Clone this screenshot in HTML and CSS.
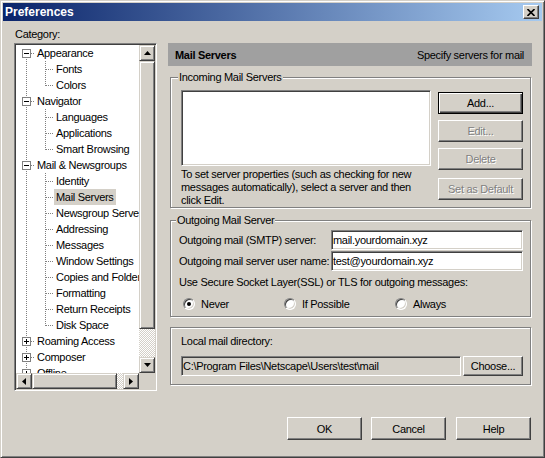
FILE: index.html
```html
<!DOCTYPE html>
<html lang="en">
    <head>
        <meta charset="UTF-8">
        <title>Preferences</title>
        <link rel="stylesheet" href="styles.css">
    </head>
    <body>
        <div class="window">
            <div class="titlebar">
                <span class="title">Preferences</span>
                <span class="close-btn">
                    <svg width="8" height="7" viewBox="0 0 8 7"><path d="M0.5 0L7.5 7M7.5 0L0.5 7" stroke="#000" stroke-width="1.6" fill="none"/></svg>
                </span>
            </div>

            <div class="main">
                <div class="left">
                    <div class="cat-label">Category:</div>
                    <div class="tree">
                        <div class="tree-view">
                            <div class="row"><i class="g node first"><i class="box"></i></i><span class="label">Appearance</span></div>
                            <div class="row"><i class="g spine"></i><i class="g branch"></i><span class="label">Fonts</span></div>
                            <div class="row"><i class="g spine"></i><i class="g branch end"></i><span class="label">Colors</span></div>
                            <div class="row"><i class="g node"><i class="box"></i></i><span class="label">Navigator</span></div>
                            <div class="row"><i class="g spine"></i><i class="g branch"></i><span class="label">Languages</span></div>
                            <div class="row"><i class="g spine"></i><i class="g branch"></i><span class="label">Applications</span></div>
                            <div class="row"><i class="g spine"></i><i class="g branch end"></i><span class="label">Smart Browsing</span></div>
                            <div class="row"><i class="g node"><i class="box"></i></i><span class="label">Mail &amp; Newsgroups</span></div>
                            <div class="row"><i class="g spine"></i><i class="g branch"></i><span class="label">Identity</span></div>
                            <div class="row"><i class="g spine"></i><i class="g branch"></i><span class="label sel">Mail Servers</span></div>
                            <div class="row"><i class="g spine"></i><i class="g branch"></i><span class="label">Newsgroup Servers</span></div>
                            <div class="row"><i class="g spine"></i><i class="g branch"></i><span class="label">Addressing</span></div>
                            <div class="row"><i class="g spine"></i><i class="g branch"></i><span class="label">Messages</span></div>
                            <div class="row"><i class="g spine"></i><i class="g branch"></i><span class="label">Window Settings</span></div>
                            <div class="row"><i class="g spine"></i><i class="g branch"></i><span class="label">Copies and Folders</span></div>
                            <div class="row"><i class="g spine"></i><i class="g branch"></i><span class="label">Formatting</span></div>
                            <div class="row"><i class="g spine"></i><i class="g branch"></i><span class="label">Return Receipts</span></div>
                            <div class="row"><i class="g spine"></i><i class="g branch end"></i><span class="label">Disk Space</span></div>
                            <div class="row"><i class="g node"><i class="box plus"></i></i><span class="label">Roaming Access</span></div>
                            <div class="row"><i class="g node"><i class="box plus"></i></i><span class="label">Composer</span></div>
                            <div class="row"><i class="g node"><i class="box plus"></i></i><span class="label">Offline</span></div>
                        </div>
                        <div class="vscroll">
                            <span class="sb-btn"><svg width="7" height="4" viewBox="0 0 7 4"><polygon points="3.5,0 7,4 0,4" fill="#000"/></svg></span>
                            <span class="sb-thumb v-thumb"></span>
                            <span class="sb-track"></span>
                            <span class="sb-btn"><svg width="7" height="4" viewBox="0 0 7 4"><polygon points="0,0 7,0 3.5,4" fill="#000"/></svg></span>
                        </div>
                        <div class="hscroll">
                            <span class="sb-btn"><svg width="4" height="7" viewBox="0 0 4 7"><polygon points="4,0 4,7 0,3.5" fill="#000"/></svg></span>
                            <span class="sb-thumb h-thumb"></span>
                            <span class="sb-track"></span>
                            <span class="sb-btn"><svg width="4" height="7" viewBox="0 0 4 7"><polygon points="0,0 4,3.5 0,7" fill="#000"/></svg></span>
                        </div>
                        <div class="sb-corner"></div>
                    </div>
                </div>

                <div class="panel">
                    <div class="panel-head">
                        <b>Mail Servers</b>
                        <span>Specify servers for mail</span>
                    </div>

                    <div class="group incoming">
                        <div class="legend">Incoming Mail Servers</div>
                        <div class="incoming-body">
                            <div class="incoming-left">
                                <div class="listbox"></div>
                                <p class="hint">To set server properties (such as checking for new<br>messages automatically), select a server and then<br>click Edit.</p>
                            </div>
                            <div class="btn-col">
                                <button class="btn default">Add...</button>
                                <button class="btn" disabled>Edit...</button>
                                <button class="btn" disabled>Delete</button>
                                <button class="btn spaced" disabled>Set as Default</button>
                            </div>
                        </div>
                    </div>

                    <div class="group outgoing">
                        <div class="legend">Outgoing Mail Server</div>
                        <div class="field-row">
                            <label class="field-label">Outgoing mail (SMTP) server:</label>
                            <input class="field" type="text" value="mail.yourdomain.xyz">
                        </div>
                        <div class="field-row">
                            <label class="field-label">Outgoing mail server user name:</label>
                            <input class="field" type="text" value="test@yourdomain.xyz">
                        </div>
                        <p class="ssl-text">Use Secure Socket Layer(SSL) or TLS for outgoing messages:</p>
                        <div class="radios">
                            <span class="radio-item w1"><i class="radio on"></i>Never</span>
                            <span class="radio-item w2"><i class="radio"></i>If Possible</span>
                            <span class="radio-item"><i class="radio"></i>Always</span>
                        </div>
                    </div>

                    <div class="group local">
                        <p class="local-label">Local mail directory:</p>
                        <div class="local-row">
                            <input class="field path" type="text" value="C:\Program Files\Netscape\Users\test\mail" readonly>
                            <button class="btn choose">Choose...</button>
                        </div>
                    </div>
                </div>
            </div>

            <div class="footer">
                <button class="btn big">OK</button>
                <button class="btn big">Cancel</button>
                <button class="btn big help">Help</button>
            </div>
        </div>
    </body>
</html>
```

FILE: styles.css
```css
body {
    margin: 0;
    background: #d4d0c8;
    font-family: "Liberation Sans", Arial, sans-serif;
    font-size: 11px;
    letter-spacing: -0.3px;
    color: #000;
}
p {
    margin: 0;
}
.window {
    width: 545px;
    height: 458px;
    box-sizing: border-box;
    border: 1px solid;
    border-color: #d4d0c8 #404040 #404040 #d4d0c8;
    box-shadow: inset 1px 1px #fff, inset -1px -1px #808080;
    padding: 2px;
    background: #d4d0c8;
}
.titlebar {
    height: 18px;
    display: flex;
    align-items: center;
    padding: 0 3px 0 2px;
    background: linear-gradient(to right, #0a246a, #a6caf0);
}
.title {
    flex: 1;
    color: #fff;
    font-weight: bold;
    font-size: 12px;
    letter-spacing: 0;
}
.close-btn {
    width: 16px;
    height: 14px;
    box-sizing: border-box;
    display: flex;
    align-items: center;
    justify-content: center;
    background: #d4d0c8;
    border: 1px solid;
    border-color: #fff #404040 #404040 #fff;
    box-shadow: inset -1px -1px #808080;
}

/* layout */
.main {
    display: flex;
    gap: 11px;
    padding: 6px 10px 0 11px;
}
.left {
    width: 143px;
}
.cat-label {
    height: 16px;
    line-height: 14px;
    padding-left: 1px;
}
.panel {
    width: 364px;
    padding-top: 16px;
}

/* tree */
.tree {
    width: 143px;
    height: 348px;
    box-sizing: border-box;
    border: 1px solid;
    border-color: #808080 #fff #fff #808080;
    box-shadow: inset 1px 1px #404040, inset -1px -1px #d4d0c8;
    padding: 1px;
    display: grid;
    grid-template-columns: 1fr 16px;
    grid-template-rows: 1fr 16px;
    background: #fff;
}
.tree-view {
    overflow: hidden;
}
.row {
    display: flex;
    height: 16px;
    white-space: nowrap;
}
.g {
    flex: none;
    width: 19px;
    height: 16px;
    box-sizing: border-box;
    background-repeat: no-repeat;
}
.g.spine {
    background-image: repeating-linear-gradient(to bottom, #808080 0 1px, transparent 1px 2px);
    background-size: 1px 16px;
    background-position: 10px 0;
}
.g.node {
    padding: 4px 0 0 6px;
    background-image: repeating-linear-gradient(to bottom, #808080 0 1px, transparent 1px 2px),
        repeating-linear-gradient(to right, #808080 0 1px, transparent 1px 2px);
    background-size: 1px 16px, 4px 1px;
    background-position: 10px 0, 15px 8px;
}
.g.node.first {
    background-size: 1px 8px, 4px 1px;
    background-position: 10px 8px, 15px 8px;
}
.g.branch {
    background-image: repeating-linear-gradient(to bottom, #808080 0 1px, transparent 1px 2px),
        repeating-linear-gradient(to right, #808080 0 1px, transparent 1px 2px);
    background-size: 1px 16px, 8px 1px;
    background-position: 10px 0, 11px 8px;
}
.g.branch.end {
    background-size: 1px 9px, 8px 1px;
}
.box {
    display: block;
    width: 9px;
    height: 9px;
    box-sizing: border-box;
    border: 1px solid #808080;
    background: linear-gradient(#000, #000) no-repeat center / 5px 1px, #fff;
}
.box.plus {
    background: linear-gradient(#000, #000) no-repeat center / 5px 1px,
        linear-gradient(#000, #000) no-repeat center / 1px 5px, #fff;
}
.label {
    padding: 0 2px;
    line-height: 16px;
}
.label.sel {
    background: #d4d0c8;
}

/* scrollbars */
.vscroll {
    display: flex;
    flex-direction: column;
}
.hscroll {
    display: flex;
}
.sb-btn, .sb-thumb {
    flex: none;
    box-sizing: border-box;
    background: #d4d0c8;
    border: 1px solid;
    border-color: #d4d0c8 #404040 #404040 #d4d0c8;
    box-shadow: inset 1px 1px #fff, inset -1px -1px #808080;
}
.sb-btn {
    width: 16px;
    height: 16px;
    display: flex;
    align-items: center;
    justify-content: center;
}
.v-thumb {
    height: 268px;
}
.h-thumb {
    width: 85px;
}
.sb-track {
    flex: 1;
    background: conic-gradient(#d4d0c8 25%, #fff 0 50%, #d4d0c8 0 75%, #fff 0);
    background-size: 2px 2px;
}
.sb-corner {
    background: #d4d0c8;
}

/* right panel */
.panel-head {
    height: 23px;
    display: flex;
    align-items: center;
    justify-content: space-between;
    padding: 0 8px 0 7px;
    background: #a0a0a0;
}
.group {
    margin: 11px 1px 0 2px;
    border: 1px solid #808080;
    box-shadow: inset 1px 1px #fff, 1px 1px #fff;
}
.legend {
    width: fit-content;
    line-height: 13px;
    padding: 0 1px;
    background: #d4d0c8;
}
.incoming {
    padding: 0 7px 0 10px;
}
.incoming .legend {
    margin: -7px 0 6px -3px;
}
.incoming-body {
    display: flex;
    gap: 7px;
}
.listbox {
    width: 250px;
    height: 76px;
    box-sizing: border-box;
    background: #fff;
    border: 1px solid;
    border-color: #808080 #fff #fff #808080;
    box-shadow: inset 1px 1px #404040, inset -1px -1px #d4d0c8;
}
.hint {
    margin-top: 2px;
    line-height: 13px;
}
.btn-col {
    width: 85px;
    display: flex;
    flex-direction: column;
    gap: 6px;
    padding-top: 2px;
}
.btn {
    font: inherit;
    letter-spacing: inherit;
    color: #000;
    padding: 0;
    height: 22px;
    box-sizing: border-box;
    background: #d4d0c8;
    border: 1px solid;
    border-color: #fff #404040 #404040 #fff;
    box-shadow: inset -1px -1px #808080;
}
.btn.default {
    border-color: #000;
    box-shadow: inset 1px 1px #fff, inset -1px -1px #404040, inset -2px -2px #808080;
}
.btn:disabled {
    color: #808080;
    text-shadow: 1px 1px #fff;
}
.btn.spaced {
    margin-top: 2px;
}
.outgoing {
    margin-top: 12px;
    padding: 0 7px 5px 8px;
}
.outgoing .legend {
    margin: -7px 0 3px -3px;
}
.field-row {
    display: flex;
    height: 20px;
    align-items: center;
}
.field-row + .field-row {
    margin-top: 1px;
}
.field-label {
    width: 152px;
    flex: none;
}
.field {
    font: inherit;
    letter-spacing: inherit;
    color: #000;
    height: 20px;
    box-sizing: border-box;
    padding: 0 1px;
    background: #fff;
    border: 1px solid;
    border-color: #808080 #fff #fff #808080;
    box-shadow: inset 1px 1px #404040, inset -1px -1px #d4d0c8;
    outline: none;
}
.field-row .field {
    flex: 1;
    min-width: 0;
}
.ssl-text {
    margin-top: 5px;
    line-height: 13px;
}
.radios {
    margin-top: 8px;
    height: 14px;
    display: flex;
    align-items: center;
    padding-left: 4px;
}
.radio-item {
    display: flex;
    align-items: center;
    gap: 6px;
}
.radio-item.w1 {
    width: 101px;
}
.radio-item.w2 {
    width: 111px;
}
.radio {
    width: 12px;
    height: 12px;
    box-sizing: border-box;
    border-radius: 50%;
    background: #fff;
    border: 1px solid;
    border-color: #808080 #fff #fff #808080;
    box-shadow: inset 1px 1px #404040, inset -1px -1px #d4d0c8;
    display: flex;
    align-items: center;
    justify-content: center;
}
.radio.on::after {
    content: "";
    width: 4px;
    height: 4px;
    border-radius: 50%;
    background: #000;
}
.local {
    margin-top: 10px;
    padding: 7px 7px 8px 10px;
}
.local-label {
    line-height: 13px;
}
.local-row {
    margin-top: 8px;
    display: flex;
    gap: 2px;
}
.field.path {
    width: 280px;
    background: #d4d0c8;
}
.btn.choose {
    width: 60px;
    height: 20px;
}
.footer {
    margin-top: 26px;
    display: flex;
    justify-content: flex-end;
    gap: 9px;
    padding-right: 11px;
}
.btn.big {
    width: 75px;
    height: 23px;
}
.btn.help {
    margin-left: 1px;
}
```
